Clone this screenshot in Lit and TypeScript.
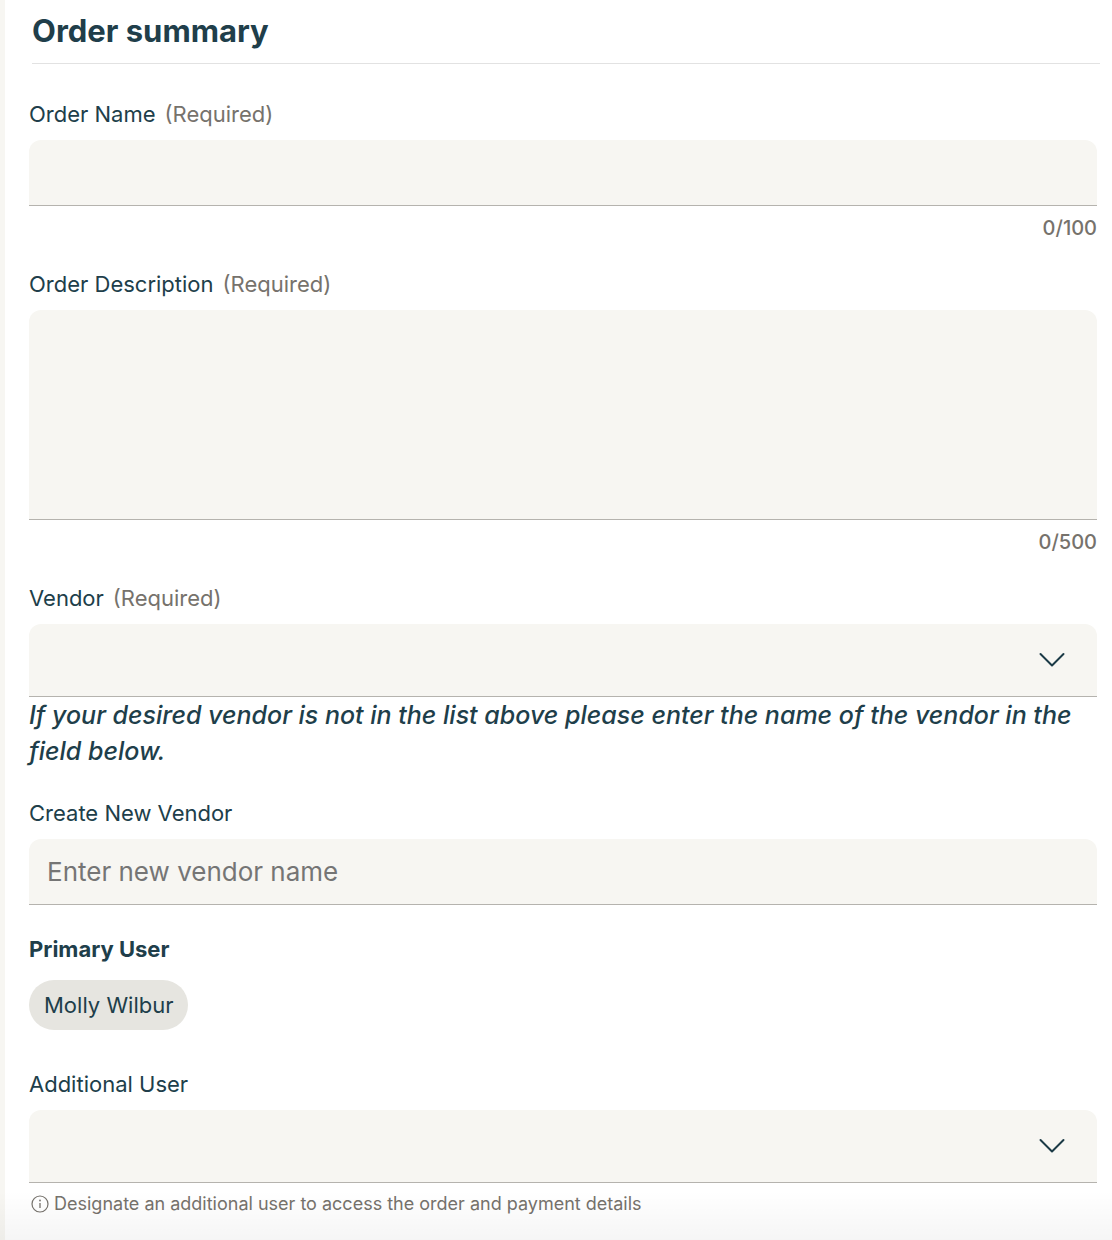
import { LitElement, html, css, nothing } from "lit";
import { customElement, state } from "lit/decorators.js";

@customElement("app-root")
export class AppRoot extends LitElement {
  static styles = css`
    :host {
      display: block;
      font-family: Inter, Roboto, "Liberation Sans", sans-serif;
      color: #203e4a;
    }
    * {
      box-sizing: border-box;
    }
    .page {
      position: relative;
      min-height: 100vh;
      background: #ffffff;
      border-left: 5px solid #f7f6f2;
      padding: 7px 12px 24px 24px;
    }
    .title {
      margin: 0 0 36px 3px;
      padding-bottom: 8px;
      border-bottom: 1px solid #e2e2e2;
      font-size: 31px;
      line-height: 48px;
      font-weight: 700;
    }
    .form {
      display: flex;
      flex-direction: column;
      gap: 30px;
      padding-right: 3px;
    }
    .field {
      display: flex;
      flex-direction: column;
    }
    .label {
      display: flex;
      gap: 9px;
      margin-bottom: 12px;
      font-size: 22px;
      line-height: 28px;
      font-weight: 400;
    }
    .required {
      color: #76726c;
    }
    .control {
      display: block;
      width: 100%;
      height: 66px;
      margin: 0;
      padding: 0 18px;
      border: 0;
      border-bottom: 1px solid #b5b3ae;
      border-radius: 12px 12px 0 0;
      background: #f7f6f2;
      color: inherit;
      font: inherit;
      font-size: 26px;
      appearance: none;
      outline-offset: -2px;
    }
    .control::placeholder {
      color: #757575;
      opacity: 1;
    }
    .area {
      height: 210px;
      padding: 16px 18px;
      resize: none;
    }
    .picker {
      display: grid;
      align-items: center;
    }
    .picker > * {
      grid-area: 1 / 1;
    }
    .select {
      height: 73px;
      padding-right: 72px;
    }
    .chevron {
      justify-self: end;
      margin: 0 32px 2px 0;
      pointer-events: none;
    }
    .counter {
      margin-top: 10px;
      text-align: right;
      font-size: 20px;
      line-height: 24px;
      font-weight: 500;
      color: #76726c;
    }
    .note {
      margin: 0;
      font-size: 25px;
      line-height: 36px;
      font-weight: 500;
      font-style: italic;
    }
    .primary {
      padding-bottom: 10px;
    }
    .subtitle {
      margin: 0 0 17px;
      font-size: 22px;
      line-height: 28px;
      font-weight: 700;
    }
    .chip {
      align-self: flex-start;
      padding: 0 15px;
      border-radius: 25px;
      background: #e6e5e0;
      font-size: 22px;
      line-height: 50px;
    }
    .hint {
      display: flex;
      align-items: center;
      gap: 5px;
      margin-top: 8px;
      padding-left: 2px;
      font-size: 18px;
      line-height: 26px;
      color: #76726c;
    }
    .fade {
      position: absolute;
      inset: auto 0 0 -5px;
      height: 50px;
      background: linear-gradient(rgba(0, 0, 0, 0), rgba(0, 0, 0, 0.04));
      pointer-events: none;
    }
  `;

  @state() private nameLength = 0;
  @state() private descriptionLength = 0;

  private label(id: string, text: string, required = false) {
    return html`<label class="label" for=${id}>
      <span>${text}</span>
      ${required ? html`<span class="required">(Required)</span>` : nothing}
    </label>`;
  }

  private picker(id: string) {
    return html`<div class="picker">
      <select class="control select" id=${id}>
        <option value=""></option>
      </select>
      <svg class="chevron" width="26" height="16" viewBox="0 0 26 16" fill="none" aria-hidden="true">
        <path d="M1.5 2L13 13.5L24.5 2" stroke="#1b3a46" stroke-width="2" stroke-linecap="round" stroke-linejoin="round" />
      </svg>
    </div>`;
  }

  render() {
    return html`<main class="page">
      <h1 class="title">Order summary</h1>
      <form class="form">
        <div class="field">
          ${this.label("order-name", "Order Name", true)}
          <input
            class="control"
            id="order-name"
            type="text"
            maxlength="100"
            @input=${(e: Event) => (this.nameLength = (e.target as HTMLInputElement).value.length)}
          />
          <div class="counter">${this.nameLength}/100</div>
        </div>
        <div class="field">
          ${this.label("order-description", "Order Description", true)}
          <textarea
            class="control area"
            id="order-description"
            maxlength="500"
            @input=${(e: Event) => (this.descriptionLength = (e.target as HTMLTextAreaElement).value.length)}
          ></textarea>
          <div class="counter">${this.descriptionLength}/500</div>
        </div>
        <div class="field">
          ${this.label("vendor", "Vendor", true)} ${this.picker("vendor")}
          <p class="note">
            If your desired vendor is not in the list above please enter the name of the vendor in the field below.
          </p>
        </div>
        <div class="field">
          ${this.label("new-vendor", "Create New Vendor")}
          <input class="control" id="new-vendor" type="text" placeholder="Enter new vendor name" />
        </div>
        <section class="field primary">
          <h2 class="subtitle">Primary User</h2>
          <span class="chip">Molly Wilbur</span>
        </section>
        <div class="field">
          ${this.label("additional-user", "Additional User")} ${this.picker("additional-user")}
          <div class="hint">
            <svg width="18" height="18" viewBox="0 0 18 18" fill="none" aria-hidden="true">
              <circle cx="9" cy="9" r="8" stroke="#76726c" stroke-width="1.2" />
              <path d="M9 8V13" stroke="#76726c" stroke-width="1.3" />
              <circle cx="9" cy="5.5" r="0.9" fill="#76726c" />
            </svg>
            <span>Designate an additional user to access the order and payment details</span>
          </div>
        </div>
      </form>
      <div class="fade"></div>
    </main>`;
  }
}
